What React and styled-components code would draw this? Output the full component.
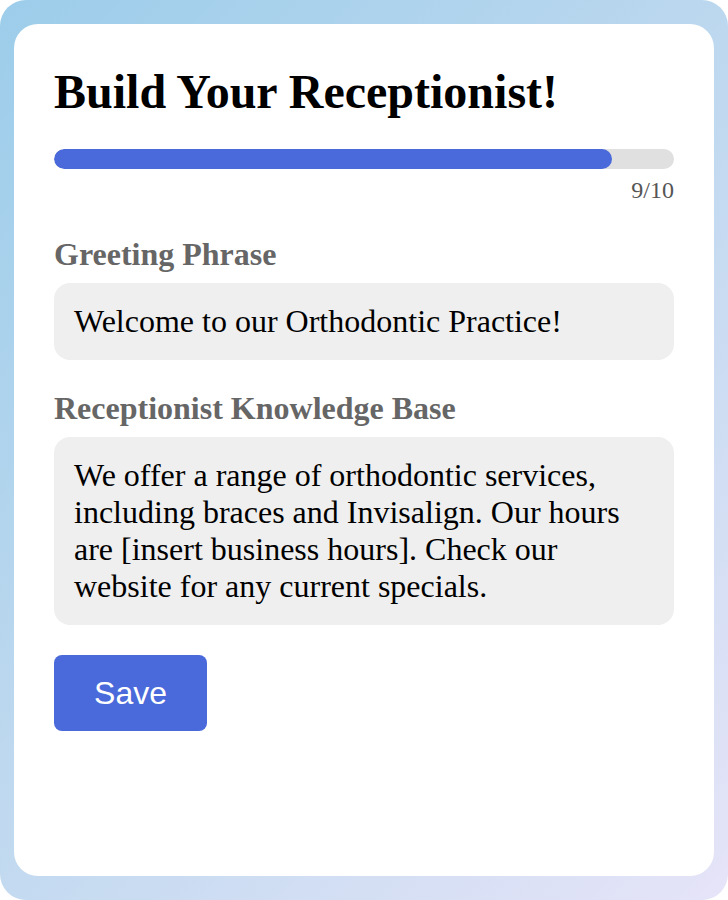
import React from 'react'
import styled, {createGlobalStyle} from 'styled-components'

const GlobalStyle = createGlobalStyle`
    html, body {
        margin: 0;
        padding: 0;
        background: #fff;
    }
    body {
        font-family: "Liberation Serif", "Times New Roman", serif;
    }
`

const Frame = styled.div`
    box-sizing: border-box;
    height: 900px;
    padding: 24px 14px;
    border-radius: 26px;
    background: linear-gradient(135deg, #9ccdea 0%, #c3daf0 55%, #e6e4f8 100%);
    display: flex;
`

const Card = styled.div`
    flex: 1;
    background: #fff;
    border-radius: 24px;
    padding: 40px 40px;
    display: flex;
    flex-direction: column;
`

const Title = styled.h1`
    margin: 0 0 30px;
    font-size: 48px;
    font-weight: bold;
    color: #000;
`

const Track = styled.div`
    height: 20px;
    border-radius: 10px;
    background: #e0e0e0;
    overflow: hidden;
`

const Fill = styled.div`
    height: 100%;
    border-radius: 10px;
    background: #4a69da;
`

const Count = styled.div`
    text-align: right;
    color: #555;
    font-size: 24px;
    margin-top: 8px;
`

const Label = styled.div`
    font-size: 32px;
    font-weight: bold;
    color: #666;
    margin: ${props => props.first ? '32px' : '30px'} 0 10px;
`

const Field = styled.div`
    background: #efefef;
    border-radius: 16px;
    padding: 20px 20px;
    font-size: 32px;
    color: #000;
`

const SaveButton = styled.button`
    align-self: flex-start;
    margin-top: 30px;
    width: 153px;
    height: 76px;
    border: none;
    border-radius: 8px;
    background: #4a69da;
    color: #fff;
    font-family: "Liberation Sans", Arial, sans-serif;
    font-size: 32px;
    cursor: pointer;
`

const App = () => {
    const step = 9
    const total = 10
    return (
        <>
            <GlobalStyle/>
            <Frame>
                <Card>
                    <Title>Build Your Receptionist!</Title>
                    <Track>
                        <Fill style={{width: `${step / total * 100}%`}}/>
                    </Track>
                    <Count>{step}/{total}</Count>
                    <Label first>Greeting Phrase</Label>
                    <Field>Welcome to our Orthodontic Practice!</Field>
                    <Label>Receptionist Knowledge Base</Label>
                    <Field>
                        We offer a range of orthodontic services, including braces and Invisalign. Our hours are [insert business hours]. Check our website for any current specials.
                    </Field>
                    <SaveButton>Save</SaveButton>
                </Card>
            </Frame>
        </>
    )
}

export default App
